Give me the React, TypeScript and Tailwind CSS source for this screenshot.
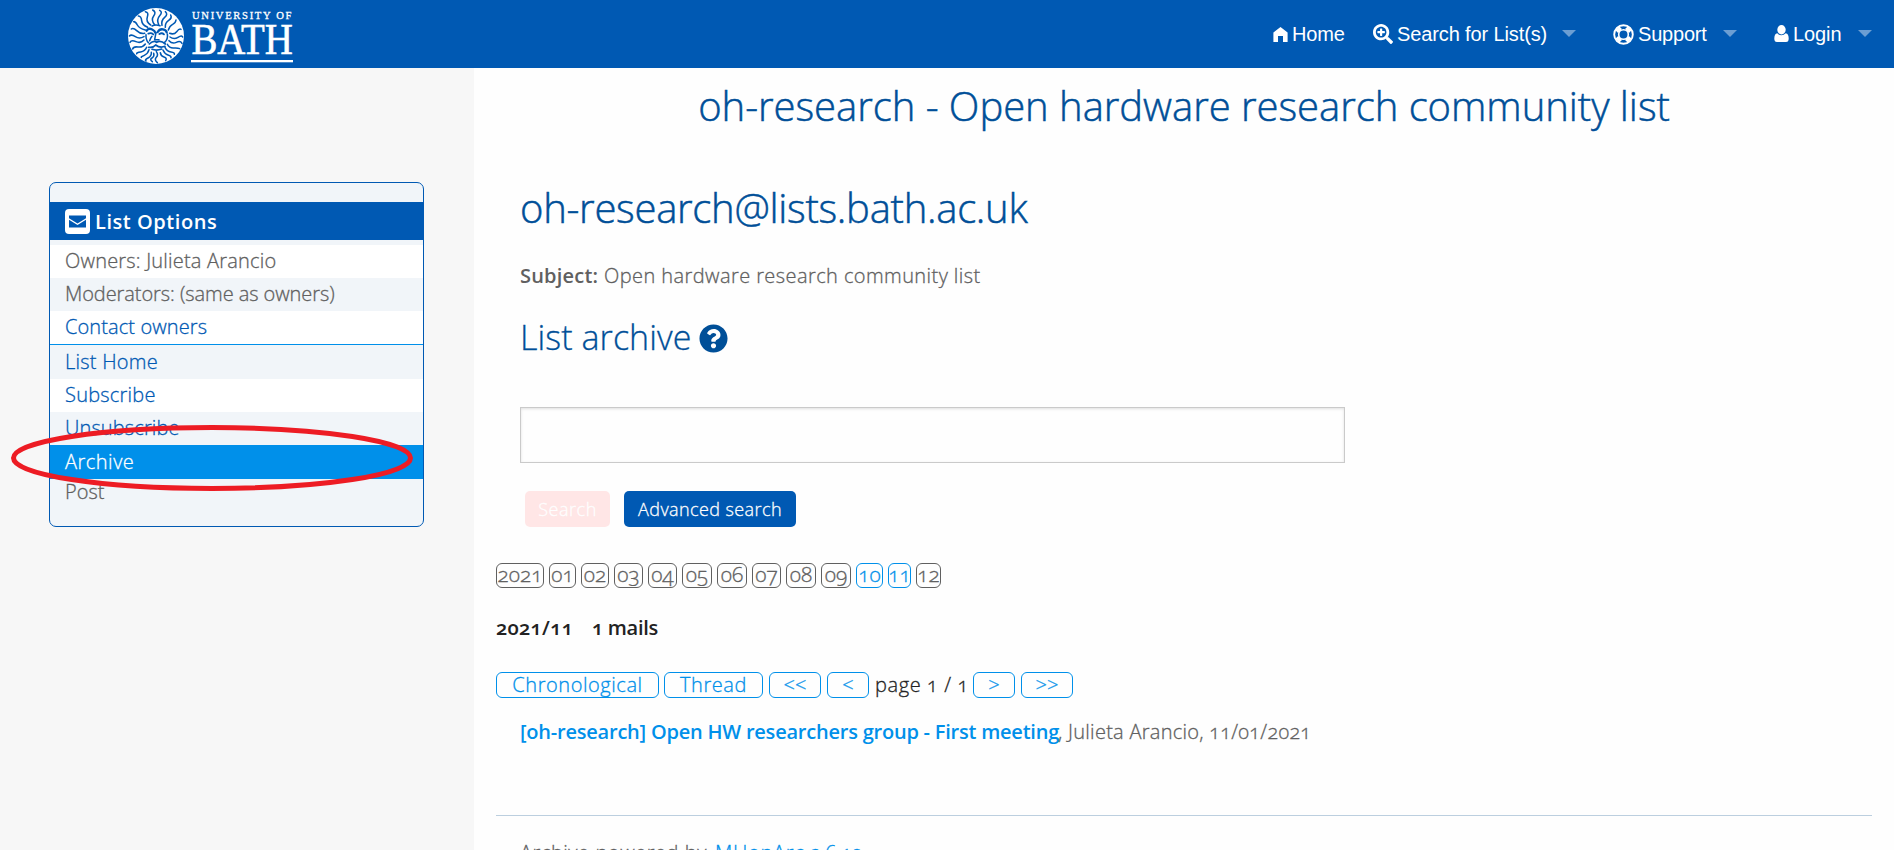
import type { ReactNode } from "react";
import { FaQuestionCircle, FaSearchPlus } from "react-icons/fa";

function Logo() {
  return (
    <svg viewBox="0 0 170 64" className="h-[64px] w-[170px] self-start" aria-label="University of Bath">
      <g transform="translate(0 4) scale(0.3333)">
        <circle cx="96" cy="96" r="84" fill="#fff" />
        <g fill="none" stroke="#0059b3" strokeWidth="4.6" strokeLinecap="round" strokeLinejoin="round">
          <path d="M92 62q-12-14-3-26t-3-18M80 63q-15-10-10-24t-6-16M104 62q-7-16 3-27t0-16M114 64q-3-15 8-24t2-17M124 70q-1-14 10-21t6-16M133 78q4-13 13-17t10-13" />
          <path d="M71 70q-17-7-18-20t-10-14M64 78q-18-4-24-15t-11-10M62 88q-14 2-24-8t-16-5M60 98q-14 8-26 0t-18-2M60 108q-10 11-24 5t-18 2M64 120q-8 11-22 9t-16 6" />
          <path d="M137 88q13 5 21-5t13-7M138 99q12 9 24 1t14-1M135 110q10 11 22 5t17 3M130 121q7 12 19 11t18 2M68 130q-5 12-18 14t-12 5M75 137q-3 12-14 17t-9 6M82 145q1 11-10 17t-6 9" />
          <path d="M123 130q6 12 18 14t10 7M117 138q5 12 15 15t9 8M109 146q1 10 11 13t5 11M97 143q7 10 0 17t3 16M89 148q3 10-5 14t1 11" />
          <path d="M68 80q5-9 15-4t11 10M101 84q6-10 16-8t11 9" strokeWidth="7" />
          <path d="M73 89q8-4 15 2M106 90q8-5 14 1" strokeWidth="5.5" />
          <path d="M96 86l-4 21 13 0M66 92q-1 16 7 24M130 90q3 15-8 25M77 110q3-8 7-13" />
          <path d="M76 120q14-13 22-5q12-7 26 5M74 130q14 2 21-7q13 10 28 4M84 136q14 5 29-1" strokeWidth="5" />
          <path d="M84 66q10-5 24-1" />
        </g>
      </g>
      <g fill="#fff" stroke="#fff">
        <text x="68" y="18.8" fontSize="10.6" className="font-['Liberation_Serif',serif]" strokeWidth="0.3" textLength="99.5">
          UNIVERSITY OF
        </text>
        <text x="67.4" y="54" fontSize="43.5" className="font-['Liberation_Serif',serif]" strokeWidth="0.6" textLength="101.5" lengthAdjust="spacingAndGlyphs">
          BATH
        </text>
        <rect x="67" y="60" width="102" height="2.3" stroke="none" />
      </g>
    </svg>
  );
}

function Caret({ className }: { className: string }) {
  return (
    <svg viewBox="0 0 14 7" className={`mt-[-1px] h-[7px] w-[14px] ${className}`}>
      <path d="M0 0h14L7 7z" fill="#fff" fillOpacity="0.42" />
    </svg>
  );
}

function TopBar() {
  return (
    <header className="flex h-[68px] shrink-0 items-center bg-[#0059b3] pl-[124px] font-['Liberation_Sans',Arial,sans-serif] text-[20px] font-normal leading-[24px] text-white">
      <Logo />
      <nav className="ml-auto flex items-center whitespace-nowrap pr-[22px]">
        <svg viewBox="0 0 15 15" className="mr-[4px] h-[15px] w-[15px]" fill="#fff">
          <path d="M7.5 0L14.6 5.6V15H10V9H5V15H.4V5.600z" />
        </svg>
        <span className="w-[53px] tracking-[-0.2px]">Home</span>
        <FaSearchPlus className="ml-[28px] h-[20px] w-[20px]" />
        <span className="ml-[4px] w-[150px] tracking-[-0.12px]">Search for List(s)</span>
        <Caret className="ml-[15px]" />
        <svg viewBox="0 0 21 21" className="ml-[37px] h-[21px] w-[21px]" fill="none" stroke="#fff">
          <circle cx="10.5" cy="10.5" r="9.3" strokeWidth="1.9" />
          <circle cx="10.5" cy="10.5" r="4.800" strokeWidth="1.6" />
          <path d="M4.300 4.300l2.700 2.700M16.700 4.300l-2.700 2.700M4.300 16.700l2.700-2.700M16.700 16.700l-2.700-2.700" strokeWidth="5.5" />
        </svg>
        <span className="ml-[4px] w-[70px] tracking-[-0.2px]">Support</span>
        <Caret className="ml-[15px]" />
        <svg viewBox="0 0 15 17" className="ml-[37px] mt-[-2px] h-[17px] w-[15px]" fill="#fff">
          <ellipse cx="7.500" cy="4.700" rx="4.200" ry="4.700" />
          <path d="M3.300 8.200Q0.300 8.800 0.300 13.500Q0.300 17 3 17H12Q14.700 17 14.700 13.500Q14.700 8.800 11.700 8.200Q9.800 10.300 7.500 10.300T3.300 8.200z" />
        </svg>
        <span className="ml-[4px] w-[50px] tracking-[-0.1px]">Login</span>
        <Caret className="ml-[15px]" />
      </nav>
    </header>
  );
}

function Row({ className, children }: { className: string; children: ReactNode }) {
  return <li className={`whitespace-nowrap pl-[15px] ${className}`}>{children}</li>;
}

function Sidebar() {
  return (
    <aside className="relative w-[474px] shrink-0 bg-[#f7f7f7] pl-[49px] pt-[114px]">
      <div className="h-[345px] w-[375px] overflow-hidden rounded-[7px] border border-[#0059b3] bg-[#f1f5f9] pt-[19px] text-[20px]">
        <h2 className="mb-[5px] flex h-[38px] items-center bg-[#0059b3] pl-[15px] font-semibold tracking-[0.55px] text-white [-webkit-text-stroke:0]">
          <svg viewBox="0 0 25 25" className="mr-[5px] h-[25px] w-[25px]">
            <rect width="25" height="25" rx="4" fill="#fff" />
            <path d="M4 6.500h17v2.700l-8.500 5.300L4 9.200z" fill="#0059b3" />
            <path d="M4 10.800l8.500 5.200 8.500-5.200V18.500H4z" fill="#0059b3" />
          </svg>
          <span className="pt-[2px]">List Options</span>
        </h2>
        <ul className="text-[#0059b3]">
          <Row className="h-[33px] bg-white leading-[32px] tracking-[0.2px] text-[#606060]">Owners: Julieta Arancio</Row>
          <Row className="h-[33px] leading-[32px] tracking-[-0.07px] text-[#606060]">Moderators: (same as owners)</Row>
          <Row className="h-[34px] border-b border-[#0090ea] bg-white leading-[32px] tracking-[0.1px]">Contact owners</Row>
          <Row className="h-[34px] leading-[33px] tracking-[0.25px]">List Home</Row>
          <Row className="h-[33px] bg-white leading-[32px] tracking-[0.22px]">Subscribe</Row>
          <Row className="h-[33px] leading-[32px] tracking-[0.12px]">Unsubscribe</Row>
          <Row className="h-[34px] bg-[#0090ea] leading-[33px] tracking-[0.5px] text-white">Archive</Row>
          <Row className="leading-[25px] text-[#606060]">Post</Row>
        </ul>
      </div>
      <svg viewBox="0 0 404 68" className="absolute left-[10px] top-[356px] h-[68px] w-[404px]">
        <ellipse cx="202" cy="34" rx="198.500" ry="30.500" fill="none" stroke="#ed1c24" strokeWidth="5" />
      </svg>
    </aside>
  );
}

const boxBase = "flex h-[25px] justify-center rounded-[6px] border leading-[21px]";
const gray = "border-[#606060] text-[#606060]";
const blue = "border-[#0090ea] text-[#0090ea]";

const months = [
  { label: "2021", box: `w-[48px] mr-[5px] ${gray}` },
  { label: "01", box: `w-[27px] mr-[5px] ${gray}` },
  { label: "02", box: `w-[28px] mr-[5px] ${gray}` },
  { label: "03", box: `w-[29px] mr-[5px] ${gray}` },
  { label: "04", box: `w-[29px] mr-[5px] ${gray}` },
  { label: "05", box: `w-[30px] mr-[5px] ${gray}` },
  { label: "06", box: `w-[30px] mr-[5px] ${gray}` },
  { label: "07", box: `w-[29px] mr-[5px] ${gray}` },
  { label: "08", box: `w-[30px] mr-[5px] ${gray}` },
  { label: "09", box: `w-[30px] mr-[5px] ${gray}` },
  { label: "10", box: `w-[27px] mr-[5px] ${blue}` },
  { label: "11", box: `w-[23px] mr-[5px] ${blue}` },
  { label: "12", box: `w-[25px] ${gray}` },
];

function NavBox({ className, children }: { className: string; children: ReactNode }) {
  return (
    <a className={`flex h-[26px] justify-center rounded-[6px] border border-[#0090ea] leading-[23px] text-[#0090ea] ${className}`}>
      {children}
    </a>
  );
}

function Main() {
  return (
    <main className="flex min-w-0 flex-1 flex-col whitespace-nowrap bg-[#fefefe] pl-[22px] pr-[22px] pt-[14px] text-[20px] leading-[30px] text-[#606060]">
      <h1 className="text-center text-[40px] leading-[48px] tracking-[-0.03px] text-[#004f98] [-webkit-text-stroke:0.5px]">
        oh-research - Open hardware research community list
      </h1>
      <h2 className="ml-[24px] mt-[54px] text-[40px] leading-[48px] tracking-[-0.28px] text-[#004f98] [-webkit-text-stroke:0.5px]">
        oh-research@lists.bath.ac.uk
      </h2>
      <p className="ml-[24px] mt-[29px]">
        <b className="inline-block w-[84px] font-semibold tracking-[0.2px] [-webkit-text-stroke:0]">Subject:</b>
        <span className="tracking-[0.42px]">Open hardware research community list</span>
      </p>
      <h3 className="ml-[24px] mt-[26px] flex text-[34px] leading-[40px] tracking-[0.07px] text-[#004f98]">
        <span className="w-[179px]">List archive</span>
        <FaQuestionCircle className="mt-[7px] h-[29px] w-[29px]" />
      </h3>
      <input className="ml-[24px] mt-[50px] h-[56px] w-[825px] shrink-0 border border-[#cacaca] bg-[#fefefe] shadow-[inset_0_1px_3px_rgba(10,10,10,0.12)] outline-none" />
      <div className="ml-[29px] mt-[28px] flex gap-[14px] text-[18px] leading-[36px] text-[#fefefe]">
        <button className="h-[36px] w-[85px] rounded-[5px] bg-[#ffe6e6] tracking-[0.54px]">Search</button>
        <button className="h-[36px] w-[172px] rounded-[5px] bg-[#0059b3] tracking-[0.41px]">Advanced search</button>
      </div>
      <div className="mt-[36px] flex text-[21px] oldstyle-nums">
        {months.map((m) => (
          <a key={m.label} className={`${boxBase} ${m.box}`}>
            {m.label}
          </a>
        ))}
      </div>
      <p className="mt-[25px] flex font-semibold oldstyle-nums text-[#222] [-webkit-text-stroke:0]">
        <span className="w-[96px] tracking-[0.3px]">2021/11</span>
        <span className="tracking-[-0.3px]">1 mails</span>
      </p>
      <div className="mt-[29px] flex h-[26px] oldstyle-nums">
        <NavBox className="mr-[5px] w-[163px] tracking-[0.56px]">Chronological</NavBox>
        <NavBox className="mr-[6px] w-[99px] tracking-[0.6px]">Thread</NavBox>
        <NavBox className="mr-[6px] w-[52px]">&lt;&lt;</NavBox>
        <NavBox className="mr-[6px] w-[42px]">&lt;</NavBox>
        <span className="w-[98px] leading-[25px] tracking-[0.6px] text-[#222]">page 1 / 1</span>
        <NavBox className="mr-[6px] w-[42px]">&gt;</NavBox>
        <NavBox className="w-[52px]">&gt;&gt;</NavBox>
      </div>
      <p className="ml-[24px] mt-[19px] flex oldstyle-nums">
        <a className="w-[538px] font-semibold tracking-[-0.22px] text-[#0090ea] [-webkit-text-stroke:0]">
          [oh-research] Open HW researchers group - First meeting
        </a>
        <span className="tracking-[0.27px]">, Julieta Arancio, 11/01/2021</span>
      </p>
      <hr className="mt-[68px] w-[1376px] border-t border-[#bccfdf]" />
      <p className="ml-[24px] mt-[22px] flex oldstyle-nums">
        <span className="w-[195px] tracking-[0.55px]">Archive powered by</span>
        <span className="w-[95px] tracking-[0.7px] text-[#0090ea]">MHonArc</span>
        <span className="text-[#0090ea]">2.6.19</span>
      </p>
    </main>
  );
}

export default function App() {
  return (
    <div className="flex h-[850px] w-full flex-col overflow-hidden font-['Open_Sans',sans-serif] font-light">
      <TopBar />
      <div className="flex min-h-0 flex-1 [-webkit-text-stroke:0.3px]">
        <Sidebar />
        <Main />
      </div>
    </div>
  );
}
